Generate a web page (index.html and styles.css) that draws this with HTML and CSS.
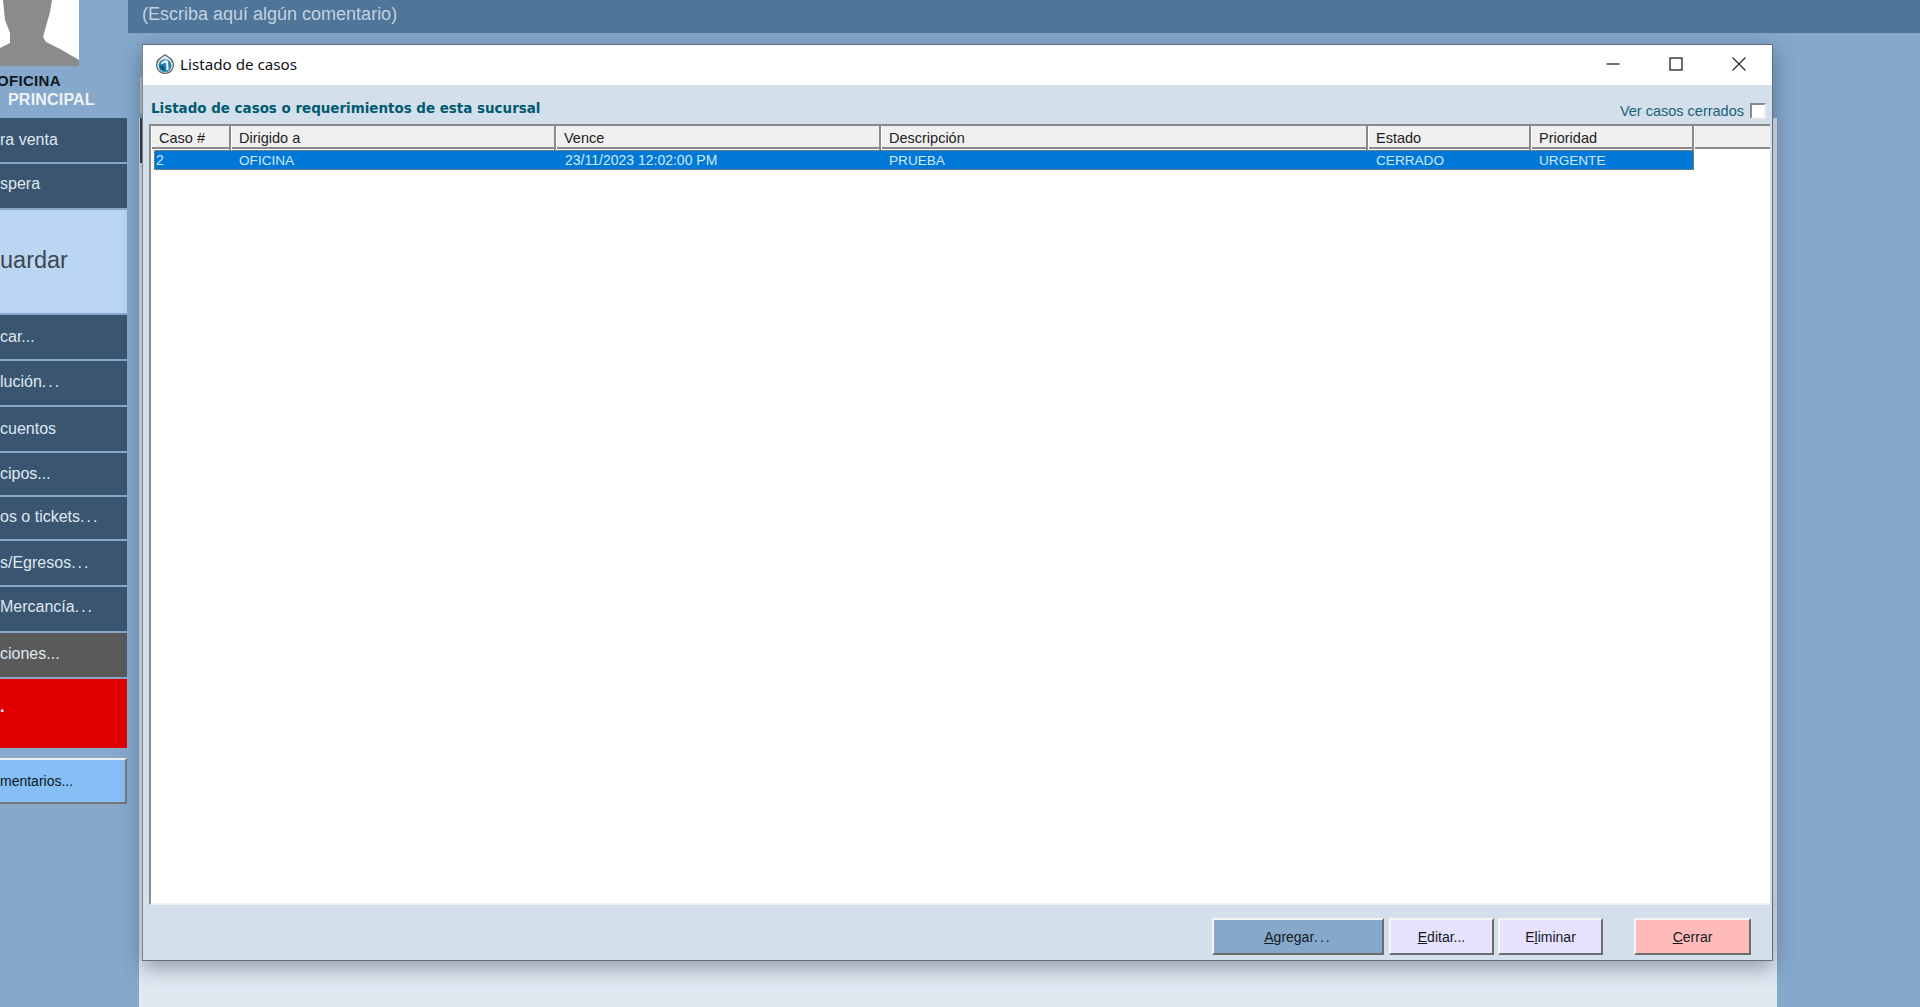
FILE: index.html
```html
<!DOCTYPE html>
<html lang="es">
<head>
    <meta charset="UTF-8">
    <meta name="viewport" content="width=device-width, initial-scale=1.0">
    <title>Listado de casos</title>
    <link rel="stylesheet" href="styles.css">
</head>
<body>

    <div class="app">
        <!-- Left menu -->
        <div class="sidebar">
            <svg class="photo" width="79" height="66" viewBox="0 0 79 66">
                <rect width="79" height="66" fill="#fff"/>
                <path d="M3 0 L52 0 L50 12 L45 30 L43 37 L46 42 L60 49 L79 60 L79 66 L0 66 L0 48 L10 43 L10 33 L5 20 Z" fill="#8b8b8b"/>
            </svg>
            <div class="user-name">OFICINA</div>
            <div class="user-branch">PRINCIPAL</div>

            <div class="menu">
                <div class="menu-item h44">ra venta</div>
                <div class="menu-item h44 up3">spera</div>
                <div class="menu-item save">uardar</div>
                <div class="menu-item h44">car...</div>
                <div class="menu-item h44 up1">lución<span class="dots">...</span></div>
                <div class="menu-item h44">cuentos</div>
                <div class="menu-item h42">cipos...</div>
                <div class="menu-item h42 up1">os o tickets<span class="dots">...</span></div>
                <div class="menu-item h44">s/Egresos<span class="dots">...</span></div>
                <div class="menu-item h44 up3">Mercancía<span class="dots">...</span></div>
                <div class="menu-item h44 gray up1">ciones...</div>
                <div class="menu-item red">.</div>
            </div>
            <div class="comments-btn">mentarios...</div>
        </div>

        <!-- Main area -->
        <div class="main">
            <div class="comment-bar">(Escriba aquí algún comentario)</div>
            <div class="work-area">
                <div class="work-panel"></div>
                <div class="edge-light"></div>
                <div class="edge-dark"></div>
            </div>
        </div>
    </div>

    <!-- Dialog -->
    <div class="dialog">
        <div class="title-bar">
            <svg class="app-icon" width="20" height="21" viewBox="0 0 20 21">
                <path d="M10 0.8 L14 3.6 A8.4 8.4 0 1 1 6 3.6 Z" fill="#e4e8eb" stroke="#60686e" stroke-width="1.2"/>
                <circle cx="10" cy="11.6" r="6.4" fill="#1b86b5"/>
                <path d="M6 10 A4.6 4.6 0 0 1 13 7 L13.6 16 L11.4 16 L11.2 9.2 A3 3 0 0 0 7.6 10 Z" fill="#f4f8fa"/>
                <path d="M5 12 A5.2 5.2 0 0 0 9.4 16.6 L9.4 13.6 L7 11.4 Z" fill="#0c4f73"/>
            </svg>
            <span class="dialog-title">Listado de casos</span>
            <div class="window-buttons">
                <svg width="14" height="14" viewBox="0 0 14 14"><path d="M0.5 7 H13.5" stroke="#222" stroke-width="1.3"/></svg>
                <svg width="14" height="14" viewBox="0 0 14 14"><rect x="1" y="1" width="12" height="12" fill="none" stroke="#222" stroke-width="1.3"/></svg>
                <svg width="14" height="14" viewBox="0 0 14 14"><path d="M0.5 0.5 L13.5 13.5 M13.5 0.5 L0.5 13.5" stroke="#222" stroke-width="1.1"/></svg>
            </div>
        </div>

        <div class="dialog-body">
            <div class="list-head">
                <h2>Listado de casos o requerimientos de esta sucursal</h2>
                <label class="closed-check">Ver casos cerrados <span class="check-box"></span></label>
            </div>

            <div class="grid-box">
                <div class="grid-row grid-header">
                    <div>Caso #</div>
                    <div>Dirigido a</div>
                    <div>Vence</div>
                    <div>Descripción</div>
                    <div>Estado</div>
                    <div>Prioridad</div>
                    <div></div>
                </div>
                <div class="grid-row grid-selected">
                    <div>2</div>
                    <div class="caps">OFICINA</div>
                    <div>23/11/2023 12:02:00 PM</div>
                    <div class="caps">PRUEBA</div>
                    <div class="caps">CERRADO</div>
                    <div class="caps">URGENTE</div>
                </div>
            </div>

            <div class="button-bar">
                <button class="btn btn-add"><u>A</u>gregar<span class="dots">...</span></button>
                <button class="btn btn-edit"><u>E</u>ditar...</button>
                <button class="btn btn-delete">E<u>l</u>iminar</button>
                <button class="btn btn-close"><u>C</u>errar</button>
            </div>
        </div>
    </div>

</body>
</html>
```

FILE: styles.css
```css
/* General Styles */
html, body { margin: 0; padding: 0; height: 100%; overflow: hidden; }
body { font-family: "Liberation Sans", Arial, sans-serif; background-color: #85a8cb; }
.app { display: flex; height: 1007px; }
.dots { letter-spacing: 2px; }

/* Sidebar */
.sidebar { width: 128px; flex-shrink: 0; }
.photo { display: block; }
.user-name { margin-top: 6px; margin-left: -3px; color: #10171d; font-size: 15px; font-weight: bold; letter-spacing: 0.3px; line-height: 18px; }
.user-branch { padding-left: 8px; color: #eef3f8; font-size: 16px; font-weight: bold; letter-spacing: 0.2px; line-height: 20px; }
.menu { margin-top: 8px; display: flex; flex-direction: column; gap: 2px; }
.menu-item { width: 127px; display: flex; align-items: center; background-color: #3a5570; color: #dfe8f0; font-size: 16px; box-sizing: border-box; }
.h44 { height: 44px; }
.h42 { height: 42px; }
.up1 { padding-bottom: 2px; }
.up3 { padding-bottom: 5px; }
.save { height: 103px; padding-bottom: 2px; background-color: #bad6f2; color: #404850; font-size: 23.5px; }
.gray { background-color: #5a5a5a; }
.red { height: 69px; padding-bottom: 14px; background-color: #e00000; color: #fff; font-weight: bold; }
.comments-btn { width: 127px; height: 46px; margin-top: 10px; box-sizing: border-box; display: flex; align-items: center; background-color: #85bff5; color: #10171d; font-size: 14px; border-top: 2px solid #f0f0f0; border-right: 2px solid #777; border-bottom: 2px solid #777; }

/* Main area */
.main { flex: 1; display: flex; flex-direction: column; }
.comment-bar { height: 33px; padding-left: 14px; background-color: #4f7599; color: #c3d2e1; font-size: 18px; line-height: 28px; }
.work-area { flex: 1; position: relative; padding: 85px 143px 0 11px; }
.work-panel { height: 100%; background-color: #e0e8f2; }
.edge-light { position: absolute; left: 12px; top: 44px; width: 2px; height: 36px; background-color: #b9cbdd; }
.edge-dark { position: absolute; left: 11px; top: 85px; width: 3px; height: 45px; background: linear-gradient(to right, #e0e8f2 1px, #2f3a45 1px); }

/* Dialog */
.dialog { position: absolute; left: 142px; top: 44px; width: 1631px; height: 917px; box-sizing: border-box; display: flex; flex-direction: column; border: 1px solid #62707d; border-left-color: #7a838c; background-color: #d3dfeb; box-shadow: 0 6px 20px rgba(40, 50, 60, 0.45); }
.title-bar { height: 40px; flex-shrink: 0; box-sizing: border-box; padding: 0 0 2px 12px; display: flex; align-items: center; background-color: #fff; }
.app-icon { flex-shrink: 0; }
.dialog-title { margin-left: 5px; color: #111; font-family: "Noto Sans", sans-serif; font-size: 15.2px; }
.window-buttons { margin-left: auto; padding-right: 26px; display: flex; gap: 49px; }

.dialog-body { flex: 1; display: flex; flex-direction: column; padding: 0 2px 0 6px; }
.list-head { height: 39px; flex-shrink: 0; display: flex; justify-content: space-between; align-items: flex-end; }
.list-head h2 { margin: 0 0 6px 2px; color: #005a70; font-family: "DejaVu Sans", sans-serif; font-size: 13.45px; font-weight: bold; line-height: 18px; }
.closed-check { display: flex; align-items: center; gap: 6px; margin-bottom: 5px; padding-right: 4px; color: #1c6078; font-size: 14.5px; }
.check-box { width: 12px; height: 12px; background-color: #fff; border: 2px solid #8a8a8a; border-right-color: #eee; border-bottom-color: #eee; }

/* Grid */
.grid-box { height: 781px; flex-shrink: 0; box-sizing: border-box; background-color: #fff; border-top: 2px solid #8a8a8a; border-left: 2px solid #8a8a8a; border-bottom: 2px solid #f0f0f0; }
.grid-row { display: grid; grid-template-columns: 80px 325px 325px 487px 163px 163px 76px; }
.grid-header { height: 21px; background-color: #f0f0f0; border-bottom: 2px solid #8a8a8a; color: #222; font-size: 14.5px; line-height: 24px; }
.grid-header > div { padding-left: 7px; border-right: 2px solid #8a8a8a; border-left: 1px solid #fff; box-sizing: border-box; }
.grid-header > div:last-child { border-right: none; }
.grid-selected { width: 1540px; height: 20px; margin-left: 3px; margin-top: 1px; grid-template-columns: 77px 325px 325px 487px 163px 163px; background-color: #0078d7; outline: 1px dotted #c98a3c; outline-offset: -1px; color: #cfe8fb; font-size: 14px; line-height: 21px; }
.grid-selected > div { padding-left: 9px; box-sizing: border-box; }
.grid-selected > div:first-child { padding-left: 2px; }
.grid-selected .caps { padding-left: 8px; font-size: 13.6px; }

/* Buttons */
.button-bar { flex: 1; display: flex; align-items: flex-start; padding-top: 13px; }
.btn { height: 37px; padding: 0; box-sizing: border-box; font-family: "Liberation Sans", Arial, sans-serif; font-size: 14px; color: #15191d; cursor: pointer; border: 2px solid; border-color: #f5f5f5 #6c6c6c #6c6c6c #f5f5f5; }
.btn-add { width: 172px; margin-left: 1063px; background-color: #85a8cb; }
.btn-edit { width: 105px; margin-left: 5px; background-color: #e6e2fd; }
.btn-delete { width: 105px; margin-left: 4px; background-color: #e6e2fd; }
.btn-close { width: 117px; margin-left: 31px; background-color: #ffbaba; }
```
